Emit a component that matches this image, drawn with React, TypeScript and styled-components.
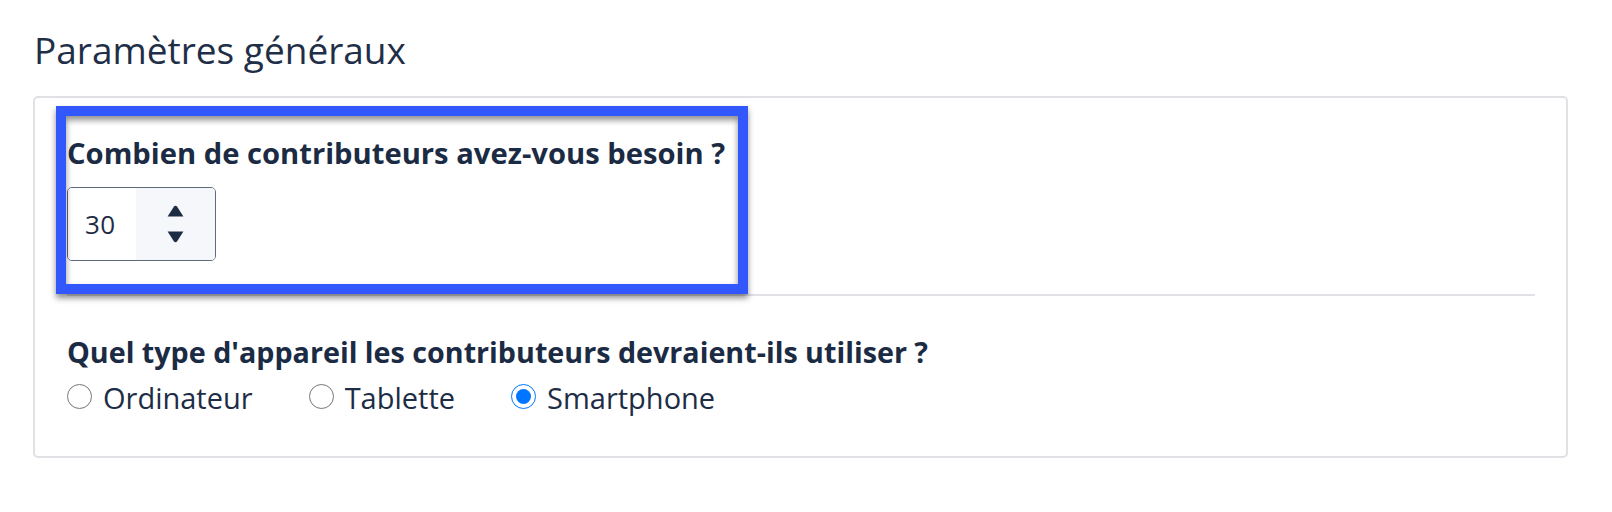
import styled, { createGlobalStyle } from "styled-components";

const GlobalStyle = createGlobalStyle`
  html, body {
    margin: 0;
    padding: 0;
    background: #ffffff;
    font-family: "Open Sans", Lato, Arial, sans-serif;
    color: #1d2d45;
  }
`;

const Page = styled.main`
  padding: 27px 44px 0 33px;
`;

const Title = styled.h1`
  margin: 0 0 24px 1px;
  font-size: 37px;
  line-height: 45px;
  font-weight: 400;
  color: #1f2f47;
`;

const Card = styled.section`
  border: 2px solid #e0e0e5;
  border-radius: 5px;
  padding: 0 31px 40px 32px;
`;

const Field = styled.div<{ $divider?: boolean }>`
  position: relative;
  display: flex;
  flex-direction: column;
  align-items: flex-start;
  padding-top: ${(p) => (p.$divider ? "37px" : "38px")};
  padding-bottom: ${(p) => (p.$divider ? "33px" : "0")};
  border-bottom: ${(p) => (p.$divider ? "2px solid #e0e0e5" : "none")};
`;

const Question = styled.label<{ $size?: number }>`
  font-size: ${(p) => p.$size ?? 29}px;
  line-height: 36px;
  font-weight: 700;
  color: #1b2b44;
`;

const Highlight = styled.div`
  position: absolute;
  left: -11px;
  top: 8px;
  width: 692px;
  height: 188px;
  box-sizing: border-box;
  border: 10px solid #3157fd;
  box-shadow: 0 4px 6px rgba(0, 0, 0, 0.45), inset 0 4px 6px rgba(0, 0, 0, 0.45);
  pointer-events: none;
`;

const NumberBox = styled.div`
  margin-top: 16px;
  display: flex;
  width: 149px;
  height: 74px;
  box-sizing: border-box;
  border: 1.5px solid #5f6a7d;
  border-radius: 5px;
  overflow: hidden;
`;

const NumberInput = styled.input`
  width: 68px;
  box-sizing: border-box;
  border: none;
  outline: none;
  padding: 0 0 0 17px;
  font-family: "Open Sans", Lato, Arial, sans-serif;
  font-size: 26px;
  letter-spacing: 0.5px;
  color: #1d2d45;
  background: #ffffff;
`;

const Spinner = styled.div`
  flex: 1;
  display: flex;
  flex-direction: column;
  align-items: center;
  justify-content: center;
  gap: 14px;
  background: #f5f7fa;
`;

const Options = styled.div`
  display: flex;
  align-items: center;
  gap: 56px;
  margin-top: 10px;
`;

const Option = styled.label`
  display: flex;
  align-items: center;
  gap: 11px;
  font-size: 29px;
  line-height: 36px;
  color: #1d2d45;
`;

const Radio = styled.input`
  margin: 0 0 4px 0;
  width: 25px;
  height: 25px;
`;

function Arrow({ down }: { down?: boolean }) {
  return (
    <svg width="17" height="12" viewBox="0 0 17 12" style={down ? { transform: "rotate(180deg)" } : undefined}>
      <path d="M7 1.6a1.8 1.8 0 0 1 3 0L16.4 11.5H0.6Z" fill="#1b2b44" />
    </svg>
  );
}

export default function App() {
  const devices = ["Ordinateur", "Tablette", "Smartphone"];

  return (
    <>
      <GlobalStyle />
      <Page>
        <Title>Paramètres généraux</Title>
        <Card>
          <Field $divider>
            <Question $size={29.2}>Combien de contributeurs avez-vous besoin ?</Question>
            <NumberBox>
              <NumberInput type="text" defaultValue="30" />
              <Spinner>
                <Arrow />
                <Arrow down />
              </Spinner>
            </NumberBox>
            <Highlight />
          </Field>
          <Field>
            <Question $size={28.7}>Quel type d'appareil les contributeurs devraient-ils utiliser ?</Question>
            <Options>
              {devices.map((d) => (
                <Option key={d}>
                  <Radio type="radio" name="device" defaultChecked={d === "Smartphone"} />
                  {d}
                </Option>
              ))}
            </Options>
          </Field>
        </Card>
      </Page>
    </>
  );
}
